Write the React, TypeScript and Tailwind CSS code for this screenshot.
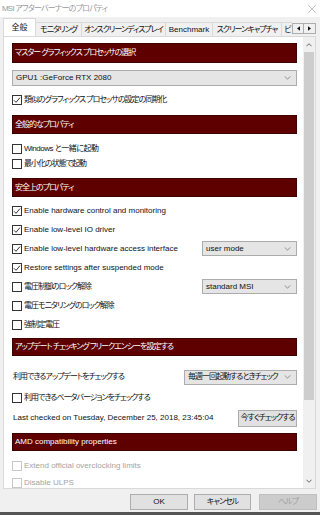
import React from 'react';

// Japanese glyphs in Noto CJK run wider than the dialog's UI font, so tighten them
const jp = (s: string) => {
  if (!/[\u3000-\u9fff]/.test(s)) return '';
  return /[A-Za-z]/.test(s) ? 'tracking-[-0.5px]' : 'tracking-[-1px]';
};

type CheckProps = { checked?: boolean; disabled?: boolean };

function Check({ checked, disabled }: CheckProps) {
  return (
    <span
      className={`w-[10px] h-[10px] border bg-white flex items-center justify-center shrink-0 ${
        disabled ? 'border-[#c8c8c8]' : 'border-[#333333]'
      }`}
    >
      {checked && (
        <svg viewBox="0 0 8 8" className="w-[8px] h-[8px]">
          <path d="M1 4.3 L3 6.3 L7 1.6" fill="none" stroke="#333" strokeWidth="1" />
        </svg>
      )}
    </span>
  );
}

function Chevron() {
  return (
    <svg viewBox="0 0 8 5" className="w-[7px] h-[4px] shrink-0">
      <path d="M0.5 0.5 L4 4 L7.5 0.5" fill="none" stroke="#6d6d6d" strokeWidth="0.9" />
    </svg>
  );
}

function Header({ title, h }: { title: string; h: string }) {
  return (
    <div
      className={`${h} bg-[#5e0000] border border-[#3e0000] text-white flex items-center pl-[2px] shrink-0 whitespace-nowrap ${jp(title)}`}
    >
      {title}
    </div>
  );
}

function Select({ value, className }: { value: string; className: string }) {
  return (
    <div
      className={`${className} bg-[#e5e5e5] border border-[#acacac] flex items-center justify-between pl-[3px] pr-[5px] shrink-0`}
    >
      <span className={`whitespace-nowrap ${jp(value)}`}>{value}</span>
      <Chevron />
    </div>
  );
}

function CheckRow({
  label,
  checked,
  disabled,
  h = 'h-[19px]',
  children,
}: {
  label: string;
  checked?: boolean;
  disabled?: boolean;
  h?: string;
  children?: React.ReactNode;
}) {
  return (
    <div className={`${h} flex items-center shrink-0`}>
      <Check checked={checked} disabled={disabled} />
      <span className={`ml-[2px] whitespace-nowrap ${jp(label)} ${disabled ? 'text-[#a3a3a3]' : ''}`}>{label}</span>
      {children}
    </div>
  );
}

const tabs = [
  { label: 'モニタリング', w: 'w-[46px]' },
  { label: 'オンスクリーンディスプレイ', w: 'w-[84px]' },
  { label: 'Benchmark', w: 'w-[47px]' },
  { label: 'スクリーンキャプチャ', w: 'w-[69px]' },
  { label: 'ビ', w: 'w-[12px]' },
];

export default function App() {
  return (
    <div className="w-[320px] h-[515px] bg-[#f0f0f0] overflow-hidden flex flex-col text-[8px] leading-none text-[#111] font-['Liberation_Sans','Noto_Sans_CJK_JP',sans-serif] [font-feature-settings:'palt']">
      {/* Title bar */}
      <div className="h-[17px] bg-white flex items-center justify-between pl-[2px] pr-[4px] shrink-0">
        <span className="text-[#9a9a9a] tracking-[-0.8px]">MSI アフターバーナーのプロパティ</span>
        <svg viewBox="0 0 8 8" className="w-[8px] h-[8px]">
          <path d="M0.5 0.5 L7.5 7.5 M7.5 0.5 L0.5 7.5" stroke="#b0b0b0" strokeWidth="0.8" />
        </svg>
      </div>

      {/* Tabs */}
      <div className="h-[19px] flex items-end pl-[3px] shrink-0 relative z-10">
        <div className="w-[289px] flex items-end overflow-hidden">
          <div className="w-[33px] h-[19px] -mb-px bg-white border border-b-0 border-[#d9d9d9] flex items-center justify-center shrink-0">
            全般
          </div>
          {tabs.map((t) => (
            <div
              key={t.label}
              className={`${t.w} h-[14px] border border-l-0 border-b-0 border-[#d9d9d9] bg-[#f0f0f0] flex items-center justify-center shrink-0 whitespace-nowrap overflow-hidden ${jp(t.label)}`}
            >
              {t.label}
            </div>
          ))}
        </div>
        <div className="self-start mt-[6px] flex">
          <div className="w-[12px] h-[11px] border border-[#adadad] bg-[#f0f0f0] flex items-center justify-center">
            <svg viewBox="0 0 4 6" className="w-[3px] h-[5px]">
              <path d="M4 0 L0 3 L4 6 Z" fill="#111" />
            </svg>
          </div>
          <div className="w-[12px] h-[11px] border border-l-0 border-[#adadad] bg-[#f0f0f0] flex items-center justify-center">
            <svg viewBox="0 0 4 6" className="w-[3px] h-[5px]">
              <path d="M0 0 L4 3 L0 6 Z" fill="#111" />
            </svg>
          </div>
        </div>
      </div>

      {/* Panel */}
      <div className="ml-[3px] w-[313px] h-[453px] border border-[#d9d9d9] bg-white flex shrink-0">
        <div className="flex-1 overflow-hidden flex flex-col pl-[8px] pr-[6px] pt-[6px]">
          <Header title="マスター グラフィックス プロセッサの選択" h="h-[20px]" />
          <Select value="GPU1 :GeForce RTX 2080" className="mt-[7px] h-[16px] w-full" />
          <CheckRow label="類似のグラフィックス プロセッサの設定の同期化" checked h="h-[16px] mt-[6px]" />

          <div className="mt-[7px]">
            <Header title="全般的なプロパティ" h="h-[19px]" />
          </div>
          <CheckRow label="Windows と一緒に起動" h="h-[14px] mt-[8px]" />
          <CheckRow label="最小化の状態で起動" h="h-[14px] mt-[1px]" />

          <div className="mt-[7px]">
            <Header title="安全上のプロパティ" h="h-[19px]" />
          </div>
          <div className="mt-[4px] flex flex-col">
            <CheckRow label="Enable hardware control and monitoring" checked />
            <CheckRow label="Enable low-level IO driver" checked />
            <CheckRow label="Enable low-level hardware access interface" checked>
              <Select value="user mode" className="ml-auto h-[15px] w-[95px]" />
            </CheckRow>
            <CheckRow label="Restore settings after suspended mode" checked />
            <CheckRow label="電圧制御のロック解除">
              <Select value="standard MSI" className="ml-auto h-[15px] w-[95px]" />
            </CheckRow>
            <CheckRow label="電圧モニタリングのロック解除" />
            <CheckRow label="強制定電圧" />
          </div>

          <div className="mt-[4px]">
            <Header title="アップデート チェッキング フリークエンシーを設定する" h="h-[18px]" />
          </div>
          <div className="mt-[11px] h-[20px] flex items-center pl-[1px] shrink-0">
            <span className="whitespace-nowrap tracking-[-1px]">利用できるアップデートをチェックする</span>
            <Select value="毎週一回起動するときチェック" className="ml-auto h-[15px] w-[113px]" />
          </div>
          <CheckRow label="利用できるベータバージョンをチェックする" h="h-[19px] mt-[1px]" />
          <div className="mt-[1px] h-[20px] flex items-center pl-[1px] shrink-0">
            <span className="whitespace-nowrap">Last checked on Tuesday, December 25, 2018, 23:45:04</span>
            <div className="ml-auto w-[59px] h-[17px] bg-[#e1e1e1] border border-[#adadad] flex items-center justify-center whitespace-nowrap tracking-[-1px]">
              今すぐチェックする
            </div>
          </div>

          <div className="mt-[5px]">
            <Header title="AMD compatibility properties" h="h-[18px]" />
          </div>
          <CheckRow label="Extend official overclocking limits" disabled h="h-[16px] mt-[7px]" />
          <CheckRow label="Disable ULPS" disabled h="h-[18px]" />
        </div>

        {/* Scrollbar */}
        <div className="w-[12px] bg-[#f0f0f0] flex flex-col shrink-0">
          <div className="h-[15px] flex items-center justify-center">
            <svg viewBox="0 0 7 4" className="w-[6px] h-[4px]">
              <path d="M0.5 3.5 L3.5 0.5 L6.5 3.5" fill="none" stroke="#606060" strokeWidth="1.1" />
            </svg>
          </div>
          <div className="h-[348px] mx-[1px] bg-[#cdcdcd]" />
          <div className="flex-1" />
          <div className="h-[15px] flex items-center justify-center">
            <svg viewBox="0 0 7 4" className="w-[6px] h-[4px]">
              <path d="M0.5 0.5 L3.5 3.5 L6.5 0.5" fill="none" stroke="#606060" strokeWidth="1.1" />
            </svg>
          </div>
        </div>
      </div>

      {/* Buttons */}
      <div className="mt-[5px] h-[16px] flex justify-end pr-[3px] shrink-0">
        <div className="w-[58px] h-full bg-[#e1e1e1] border border-[#adadad] flex items-center justify-center">OK</div>
        <div className="ml-[6px] w-[57px] h-full bg-[#e1e1e1] border border-[#adadad] flex items-center justify-center tracking-[-1px]">
          キャンセル
        </div>
        <div className="ml-[8px] w-[58px] h-full bg-[#cccccc] border border-[#bfbfbf] text-[#a0a0a0] flex items-center justify-center tracking-[-1px]">
          ヘルプ
        </div>
      </div>
      <div className="mt-auto h-[3px] bg-[#555555] shrink-0" />
    </div>
  );
}
